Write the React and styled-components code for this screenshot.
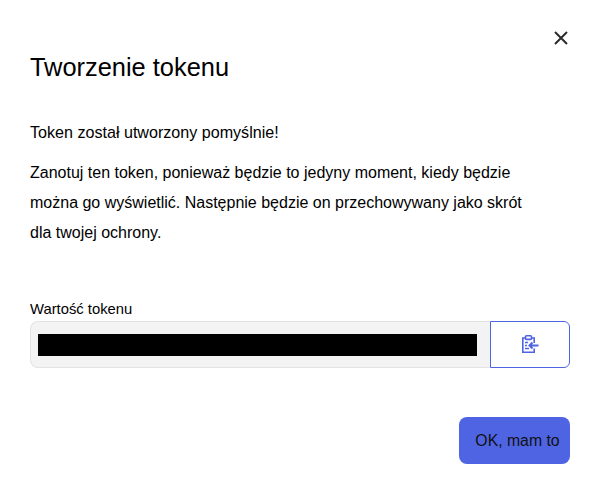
import React from 'react';
import styled, { createGlobalStyle } from 'styled-components';

const Global = createGlobalStyle`
    html, body {
        margin: 0;
        padding: 0;
        background: #fff;
    }
    body {
        font-family: "Liberation Sans", Arial, sans-serif;
        color: #111;
    }
`;

const Dialog = styled.div`
    position: relative;
    width: 597px;
    height: 492px;
    box-sizing: border-box;
    padding: 51px 27px 0 30px;
    display: flex;
    flex-direction: column;
`;

const CloseButton = styled.button`
    position: absolute;
    top: 29px;
    left: 552px;
    width: 18px;
    height: 18px;
    padding: 0;
    border: 0;
    background: none;
    display: flex;
`;

const Title = styled.h1`
    margin: 0;
    font-size: 25.4px;
    line-height: 32px;
    font-weight: 400;
    color: #000;
`;

const Lead = styled.p`
    margin: 39px 0 0;
    font-size: 16.1px;
    line-height: 20px;
    color: #000;
`;

const Note = styled.p`
    margin: 16px 0 0;
    width: 510px;
    font-size: 16px;
    line-height: 30.2px;
    color: #000;
`;

const FieldLabel = styled.label`
    display: block;
    margin-top: 51px;
    font-size: 14.8px;
    line-height: 18px;
    color: #000;
`;

const Field = styled.div`
    display: flex;
    height: 47px;
    margin-top: 3px;
`;

const TokenBox = styled.div`
    flex: 1;
    box-sizing: border-box;
    background: #f3f3f3;
    border: 1px solid #e3e3e3;
    border-right: 0;
    border-radius: 8px 0 0 8px;
    display: flex;
    align-items: center;
    padding: 1px 13px 0 7px;
`;

const Redacted = styled.div`
    width: 100%;
    height: 22px;
    background: #000;
`;

const CopyButton = styled.button`
    width: 80px;
    box-sizing: border-box;
    background: #fff;
    border: 1px solid #4f64e3;
    border-radius: 0 6px 6px 0;
    padding: 0;
    display: flex;
    align-items: center;
    justify-content: center;
`;

const Footer = styled.div`
    display: flex;
    justify-content: flex-end;
    margin-top: 49px;
`;

const PrimaryButton = styled.button`
    width: 111px;
    height: 47px;
    border: 0;
    border-radius: 8px;
    background: #4f64e3;
    color: #111;
    font-family: inherit;
    font-size: 15.8px;
    padding: 2px 0 0 6px;
`;

const CloseIcon = () => (
    <svg width="18" height="18" viewBox="0 0 18 18" fill="none" stroke="#2b2b2b" strokeWidth="2">
        <path d="M3 3l12 12M15 3L3 15" />
    </svg>
);

const ClipboardIcon = () => (
    <svg width="18" height="20" viewBox="0 0 18 20" fill="none" stroke="#4f64e3" strokeWidth="1.6">
        <path d="M4.5 4H1.8v14.2h11.4V14.5M13.2 9V4H10.5" />
        <rect x="4.5" y="1.8" width="6" height="3.6" rx="1" />
        <path d="M17.5 11.5H8.5M11.5 8.5l-3 3 3 3" strokeWidth="2" />
        <path d="M4 8.5h3M4 11.5h2M4 14.5h4" />
    </svg>
);

export default function App() {
    return (
        <Dialog>
            <Global />
            <CloseButton aria-label="Zamknij"><CloseIcon /></CloseButton>
            <Title>Tworzenie tokenu</Title>
            <Lead>Token został utworzony pomyślnie!</Lead>
            <Note>
                Zanotuj ten token, ponieważ będzie to jedyny moment, kiedy będzie
                można go wyświetlić. Następnie będzie on przechowywany jako skrót
                dla twojej ochrony.
            </Note>
            <FieldLabel>Wartość tokenu</FieldLabel>
            <Field>
                <TokenBox><Redacted /></TokenBox>
                <CopyButton aria-label="Kopiuj"><ClipboardIcon /></CopyButton>
            </Field>
            <Footer>
                <PrimaryButton>OK, mam to</PrimaryButton>
            </Footer>
        </Dialog>
    );
}
